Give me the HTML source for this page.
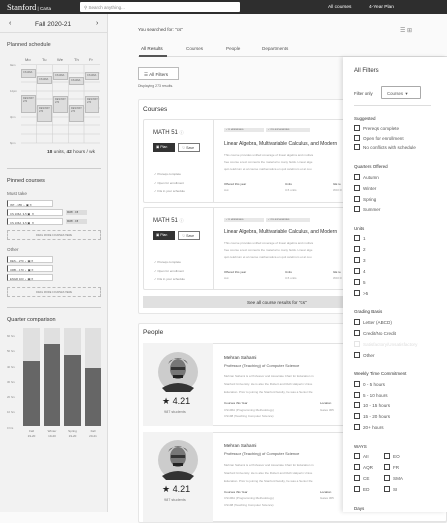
<!DOCTYPE html><html><head><meta charset="utf-8"><style>
*{box-sizing:border-box;margin:0;padding:0}
body{width:447px;height:512px;overflow:hidden;position:relative;background:#fafafa;font-family:"Liberation Sans",sans-serif;color:#333}
.a{position:absolute;white-space:nowrap}
.t{font-size:4px;color:#666}
.h{font-size:5.5px;font-weight:bold;color:#333}
.cb{position:absolute;width:6px;height:6px;border:0.8px solid #444;background:#fff}
.fl{position:absolute;font-size:4.6px;color:#555;white-space:nowrap}
.blk{position:absolute;background:#ddd;border:0.5px solid #bbb;font-size:2.5px;color:#666;padding:1px}
.chip{position:absolute;height:7px;background:#fff;border:0.5px solid #ccc;border-left:1.5px solid #555;font-size:2.8px;color:#444;padding:1.5px 2px}
.tag{position:absolute;height:4px;background:#e8e8e8;font-size:2px;color:#555;padding:1px 2px}
</style></head><body>
<div class="a" style="left:0;top:0;width:447px;height:14px;background:#2e2e2e"></div>
<div class="a" style="left:7px;top:2px;font-family:'Liberation Serif',serif;font-size:8.5px;color:#fff">Stanford<span style="font-family:'Liberation Sans';font-size:4.5px"> | Carta</span></div>
<div class="a" style="left:80px;top:2px;width:160px;height:10px;background:#fff;border-radius:1px"></div>
<div class="a" style="left:84px;top:4.5px;font-size:4.5px;color:#888">⚲ Search anything...</div>
<div class="a" style="left:328px;top:4.5px;font-size:4.8px;color:#fff">All courses</div>
<div class="a" style="left:369px;top:4.5px;font-size:4.8px;color:#fff">4-Year Plan</div>
<div class="a" style="left:0;top:14px;width:108px;height:498px;background:#f2f2f2;border-right:0.5px solid #ddd"></div>
<div class="a" style="left:9px;top:20px;font-size:7px">‹</div>
<div class="a" style="left:35px;top:21px;font-size:6.5px">Fall 2020-21</div>
<div class="a" style="left:96px;top:20px;font-size:7px">›</div>
<div class="a" style="left:0;top:32px;width:108px;height:0.5px;background:#ddd"></div>
<div class="a h" style="left:7px;top:42px;font-weight:normal;color:#444">Planned schedule</div>
<div class="a t" style="left:25px;top:57px">Mo</div><div class="a t" style="left:42px;top:57px">Tu</div><div class="a t" style="left:57px;top:57px">We</div><div class="a t" style="left:74px;top:57px">Th</div><div class="a t" style="left:89px;top:57px">Fr</div>
<svg class="a" style="left:0;top:60px" width="108" height="90">
<g stroke="#ccc" stroke-width="0.5">
<line x1="21" y1="4.5" x2="100" y2="4.5"/><line x1="21" y1="13" x2="100" y2="13"/><line x1="21" y1="22" x2="100" y2="22"/><line x1="21" y1="31" x2="100" y2="31"/><line x1="21" y1="39" x2="100" y2="39"/><line x1="21" y1="48" x2="100" y2="48"/><line x1="21" y1="57" x2="100" y2="57"/><line x1="21" y1="65" x2="100" y2="65"/><line x1="21" y1="74" x2="100" y2="74"/><line x1="21" y1="83" x2="100" y2="83"/>
<line x1="36.5" y1="5" x2="36.5" y2="83"/><line x1="52.5" y1="5" x2="52.5" y2="83"/><line x1="68.5" y1="5" x2="68.5" y2="83"/><line x1="84" y1="5" x2="84" y2="83"/></g></svg>
<div class="a" style="left:10px;top:63px;font-size:2.8px;color:#888">9am</div><div class="a" style="left:10px;top:89px;font-size:2.8px;color:#888">12pm</div><div class="a" style="left:10px;top:115px;font-size:2.8px;color:#888">3pm</div><div class="a" style="left:10px;top:141px;font-size:2.8px;color:#888">6pm</div>
<div class="blk" style="left:21px;top:69px;width:15px;height:9px">CS106A</div>
<div class="blk" style="left:37px;top:76px;width:15px;height:8px">CS106A</div>
<div class="blk" style="left:53px;top:72px;width:15px;height:8px">CS106A</div>
<div class="blk" style="left:69px;top:77px;width:15px;height:8px">CS106A</div>
<div class="blk" style="left:85px;top:72px;width:14px;height:8px">CS106A</div>
<div class="blk" style="left:21px;top:95px;width:15px;height:18px">DESINST 270</div>
<div class="blk" style="left:37px;top:105px;width:15px;height:17px">DESINST 270</div>
<div class="blk" style="left:53px;top:96px;width:15px;height:17px">DESINST 270</div>
<div class="blk" style="left:69px;top:105px;width:15px;height:17px">DESINST 270</div>
<div class="blk" style="left:85px;top:96px;width:14px;height:17px">DESINST 270</div>
<div class="a" style="left:47px;top:150px;font-size:4.8px;color:#444"><b>18</b> units, <b>42</b> hours / wk</div>
<div class="a" style="left:7px;top:168px;width:94px;height:0.5px;background:#ccc"></div>
<div class="a h" style="left:7px;top:178px;font-weight:normal;color:#333">Pinned courses</div>
<div class="a t" style="left:7px;top:191px;font-size:4.6px">Must take</div>
<div class="chip" style="left:7px;top:200px;width:46px">INT....155 &nbsp;› &nbsp;▣ ✕</div>
<div class="chip" style="left:7px;top:209px;width:56px">CS 106A &nbsp;3-5 ▣ &nbsp;✕</div>
<div class="a" style="left:66px;top:210px;width:21px;height:5px;background:#ddd;font-size:2.5px;padding:1px;color:#444">MWF · F8</div>
<div class="chip" style="left:7px;top:218px;width:56px">CS 106A &nbsp;3-5 ▣ &nbsp;✕</div>
<div class="a" style="left:66px;top:219px;width:21px;height:5px;background:#ddd;font-size:2.5px;padding:1px;color:#444">MWF · F8</div>
<div class="a" style="left:7px;top:230px;width:94px;height:10px;border:0.6px dashed #bbb;font-size:2.5px;color:#777;text-align:center;line-height:9px">DRAG MORE COURSES HERE</div>
<div class="a t" style="left:7px;top:247px;font-size:4.6px">Other</div>
<div class="chip" style="left:7px;top:256px;width:46px">DES....270 &nbsp;› &nbsp;▣ ✕</div>
<div class="chip" style="left:7px;top:265px;width:46px">URB....170 &nbsp;› &nbsp;▣ ✕</div>
<div class="chip" style="left:7px;top:274px;width:46px">ENGR 103 &nbsp;› &nbsp;▣ ✕</div>
<div class="a" style="left:7px;top:287px;width:94px;height:10px;border:0.6px dashed #bbb;font-size:2.5px;color:#777;text-align:center;line-height:9px">DRAG MORE COURSES HERE</div>
<div class="a" style="left:7px;top:307px;width:94px;height:0.5px;background:#ccc"></div>
<div class="a h" style="left:7px;top:317px;font-weight:normal">Quarter comparison</div>
<div class="a" style="left:7px;top:329px;font-size:2.8px;color:#888;line-height:15.3px">60 hrs<br>50 hrs<br>40 hrs<br>30 hrs<br>20 hrs<br>10 hrs<br>0 hrs</div>
<div class="a" style="left:23px;top:328px;width:17px;height:98px;background:#e0e0e0"></div><div class="a" style="left:23px;top:361px;width:17px;height:65px;background:#666"></div>
<div class="a" style="left:44px;top:328px;width:16px;height:98px;background:#e0e0e0"></div><div class="a" style="left:44px;top:344px;width:16px;height:82px;background:#666"></div>
<div class="a" style="left:64px;top:328px;width:17px;height:98px;background:#e0e0e0"></div><div class="a" style="left:64px;top:355px;width:17px;height:71px;background:#666"></div>
<div class="a" style="left:85px;top:328px;width:16px;height:98px;background:#e0e0e0"></div><div class="a" style="left:85px;top:368px;width:16px;height:58px;background:#666"></div>
<div class="a" style="left:23px;top:429px;width:17px;text-align:center;font-size:3px;color:#777;line-height:5px">Fall<br>19-20</div>
<div class="a" style="left:44px;top:429px;width:16px;text-align:center;font-size:3px;color:#777;line-height:5px">Winter<br>19-20</div>
<div class="a" style="left:64px;top:429px;width:17px;text-align:center;font-size:3px;color:#777;line-height:5px">Spring<br>19-20</div>
<div class="a" style="left:85px;top:429px;width:16px;text-align:center;font-size:3px;color:#777;line-height:5px">Fall<br>20-21</div>
<div class="a" style="left:138px;top:27px;font-size:4.6px;color:#444">You searched for: "cs"</div>
<div class="a" style="left:400px;top:27px;font-size:6px;color:#888">☰ ⊞</div>
<div class="a" style="left:141px;top:46px;font-size:4.6px;color:#333">All Results</div>
<div class="a" style="left:186px;top:46px;font-size:4.6px;color:#555">Courses</div>
<div class="a" style="left:226px;top:46px;font-size:4.6px;color:#555">People</div>
<div class="a" style="left:262px;top:46px;font-size:4.6px;color:#555">Departments</div>
<div class="a" style="left:138px;top:56px;width:309px;height:0.5px;background:#ddd"></div>
<div class="a" style="left:139px;top:55px;width:28px;height:1.5px;background:#555"></div>
<div class="a" style="left:138px;top:67px;width:41px;height:13px;border:0.6px solid #bbb;background:#fff;font-size:4.6px;color:#444;padding:3.5px 5px">☰ All Filters</div>
<div class="a" style="left:138px;top:84px;font-size:3.5px;color:#666">Displaying 273 results.</div>
<div class="a" style="left:138px;top:99px;width:309px;height:215px;background:#fff;border:0.5px solid #e6e6e6;border-radius:2px"></div>
<div class="a" style="left:143px;top:106px;font-size:6.5px;color:#333">Courses</div>
<div class="a" style="left:143px;top:119px;width:304px;height:84px;border:0.5px solid #e3e3e3;border-radius:2px"></div>
<div class="a" style="left:213px;top:119px;width:0.5px;height:84px;background:#e3e3e3"></div>
<div class="a" style="left:153px;top:130px;font-size:6px;color:#333">MATH 51 <span style="font-size:4px;color:#999">ⓘ</span></div>
<div class="a" style="left:153px;top:143px;width:22px;height:9px;background:#333;color:#fff;font-size:3.5px;padding:2.3px 3px">▣ Plan</div>
<div class="a" style="left:178px;top:143px;width:22px;height:9px;border:0.5px solid #777;background:#fff;font-size:3.5px;padding:2.3px 3px;color:#444">♡ Save</div>
<div class="a" style="left:154px;top:170px;font-size:3px;color:#888;line-height:8.5px">✓ Prereqs complete<br>✓ Open for enrollment<br>✓ Fits in your schedule</div>
<div class="tag" style="left:224px;top:128px;width:40px">✓ 11 HRS/WK AVG</div><div class="tag" style="left:264px;top:128px;width:44px;margin-left:2px">✓ 76% SOPHOMORES</div>
<div class="a" style="left:224px;top:141px;font-size:5px;color:#333">Linear Algebra, Multivariable Calculus, and Modern</div>
<div class="a" style="left:224px;top:151.5px;font-size:3px;color:#999;line-height:7.3px">This course provides unified coverage of linear algebra and multiva<br>free course a text connects the material to many fields. Linear alge<br>quit celebrum et al course mathematica en quit celebrum et al cou</div>
<div class="a" style="left:224px;top:181px;font-size:3px;color:#444;line-height:6px">Offered this year<br><span style="color:#999">Aut</span></div>
<div class="a" style="left:285px;top:181px;font-size:3px;color:#444;line-height:6px">Units<br><span style="color:#999">3-5 units</span></div>
<div class="a" style="left:333px;top:181px;font-size:3px;color:#444;line-height:6px">GE re<br><span style="color:#999">WAY-F</span></div>
<div class="a" style="left:143px;top:207px;width:304px;height:83px;border:0.5px solid #e3e3e3;border-radius:2px"></div>
<div class="a" style="left:213px;top:207px;width:0.5px;height:83px;background:#e3e3e3"></div>
<div class="a" style="left:153px;top:218px;font-size:6px;color:#333">MATH 51 <span style="font-size:4px;color:#999">ⓘ</span></div>
<div class="a" style="left:153px;top:231px;width:22px;height:9px;background:#333;color:#fff;font-size:3.5px;padding:2.3px 3px">▣ Plan</div>
<div class="a" style="left:178px;top:231px;width:22px;height:9px;border:0.5px solid #777;background:#fff;font-size:3.5px;padding:2.3px 3px;color:#444">♡ Save</div>
<div class="a" style="left:154px;top:258px;font-size:3px;color:#888;line-height:8.5px">✓ Prereqs complete<br>✓ Open for enrollment<br>✓ Fits in your schedule</div>
<div class="tag" style="left:224px;top:218px;width:40px">✓ 11 HRS/WK AVG</div><div class="tag" style="left:264px;top:218px;width:44px;margin-left:2px">✓ 76% SOPHOMORES</div>
<div class="a" style="left:224px;top:229px;font-size:5px;color:#333">Linear Algebra, Multivariable Calculus, and Modern</div>
<div class="a" style="left:224px;top:239.5px;font-size:3px;color:#999;line-height:7.3px">This course provides unified coverage of linear algebra and multiva<br>free course a text connects the material to many fields. Linear alge<br>quit celebrum et al course mathematica en quit celebrum et al cou</div>
<div class="a" style="left:224px;top:269px;font-size:3px;color:#444;line-height:6px">Offered this year<br><span style="color:#999">Aut</span></div>
<div class="a" style="left:285px;top:269px;font-size:3px;color:#444;line-height:6px">Units<br><span style="color:#999">3-5 units</span></div>
<div class="a" style="left:333px;top:269px;font-size:3px;color:#444;line-height:6px">GE re<br><span style="color:#999">WAY-F</span></div>
<div class="a" style="left:143px;top:296px;width:304px;height:12px;background:#e0e0e0"></div>
<div class="a" style="left:247px;top:299.5px;font-size:4.6px;color:#333">See all course results for "cs"</div>
<div class="a" style="left:138px;top:323px;width:309px;height:200px;background:#fff;border:0.5px solid #e6e6e6;border-radius:2px"></div>
<div class="a" style="left:143px;top:329px;font-size:6.5px;color:#333">People</div>
<div class="a" style="left:143px;top:343px;width:304px;height:83px;border:0.5px solid #e3e3e3;border-radius:2px"></div>
<div class="a" style="left:143px;top:343px;width:70px;height:83px;background:#f3f3f3"></div>
<div class="a" style="left:143px;top:432px;width:304px;height:90px;border:0.5px solid #e3e3e3;border-radius:2px"></div>
<div class="a" style="left:143px;top:432px;width:70px;height:90px;background:#f3f3f3"></div>
<svg class="a" style="left:158px;top:352px" width="40" height="40"><circle cx="20" cy="20" r="20" fill="#ccc"/><ellipse cx="20" cy="17" rx="8" ry="10" fill="#777"/><path d="M10 12 Q20 0 30 12 L28 9 Q20 4 12 9Z" fill="#222"/><rect x="13" y="15" width="14" height="3" fill="#333"/><rect x="15" y="23" width="10" height="3" fill="#222"/><path d="M4 36 Q20 26 36 36 L32 40 L8 40Z" fill="#333"/></svg>
<svg class="a" style="left:158px;top:440px" width="40" height="40"><circle cx="20" cy="20" r="20" fill="#ccc"/><ellipse cx="20" cy="17" rx="8" ry="10" fill="#777"/><path d="M10 12 Q20 0 30 12 L28 9 Q20 4 12 9Z" fill="#222"/><rect x="13" y="15" width="14" height="3" fill="#333"/><rect x="15" y="23" width="10" height="3" fill="#222"/><path d="M4 36 Q20 26 36 36 L32 40 L8 40Z" fill="#333"/></svg>
<div class="a" style="left:162px;top:396px;font-size:9px;color:#222">★ 4.21</div>
<div class="a" style="left:164px;top:410px;font-size:3.8px;color:#777">987 students</div>
<div class="a" style="left:162px;top:484px;font-size:9px;color:#222">★ 4.21</div>
<div class="a" style="left:164px;top:498px;font-size:3.8px;color:#777">987 students</div>
<div class="a" style="left:224px;top:354.5px;font-size:4.6px;color:#333">Mehran Sahami</div>
<div class="a" style="left:224px;top:362.5px;font-size:4px;color:#555">Professor (Teaching) of Computer Science</div>
<div class="a" style="left:224px;top:372px;font-size:3px;color:#999;line-height:8px">Mehran Sahami is a Professor and Associate Chair for Education in<br>Stanford University. He is also the Robert and Ruth Halperin Unive<br>Education. Prior to joining the Stanford faculty, he was a Senior Re</div>
<div class="a" style="left:224px;top:400px;font-size:3px;color:#444;line-height:6.5px">Courses this Year<br><span style="color:#999">CS106A (Programming Methodology)<br>CS198 (Teaching Computer Science)</span></div>
<div class="a" style="left:320px;top:400px;font-size:3px;color:#444;line-height:6.5px">Location<br><span style="color:#999">Gates 305</span></div>
<div class="a" style="left:224px;top:443px;font-size:4.6px;color:#333">Mehran Sahami</div>
<div class="a" style="left:224px;top:451px;font-size:4px;color:#555">Professor (Teaching) of Computer Science</div>
<div class="a" style="left:224px;top:460.5px;font-size:3px;color:#999;line-height:8px">Mehran Sahami is a Professor and Associate Chair for Education in<br>Stanford University. He is also the Robert and Ruth Halperin Unive<br>Education. Prior to joining the Stanford faculty, he was a Senior Re</div>
<div class="a" style="left:224px;top:488.5px;font-size:3px;color:#444;line-height:6.5px">Courses this Year<br><span style="color:#999">CS106A (Programming Methodology)<br>CS198 (Teaching Computer Science)</span></div>
<div class="a" style="left:320px;top:488.5px;font-size:3px;color:#444;line-height:6.5px">Location<br><span style="color:#999">Gates 305</span></div>
<div class="a" style="left:343px;top:57px;width:104px;height:455px;background:#fff;box-shadow:-2px 0 4px rgba(0,0,0,0.12)"></div>
<div class="a" style="left:354px;top:68px;font-size:6px;color:#333">All Filters</div>
<div class="a" style="left:354px;top:91px;font-size:4.3px;color:#444">Filter only</div>
<div class="a" style="left:381px;top:86px;width:40px;height:13px;border:0.6px solid #aaa;border-radius:1px;font-size:4.3px;color:#555;padding:3.5px 5px">Courses &nbsp;▾</div>
<div class="a" style="left:354px;top:105px;width:77px;height:0.5px;background:#ddd"></div>
<div class="a" style="left:354px;top:116px;font-size:4.5px;color:#333">Suggested</div>
<div class="a" style="left:354px;top:164px;font-size:4.5px;color:#333">Quarters Offered</div>
<div class="a" style="left:354px;top:226px;font-size:4.5px;color:#333">Units</div>
<div class="a" style="left:354px;top:309px;font-size:4.5px;color:#333">Grading Basis</div>
<div class="a" style="left:354px;top:371px;font-size:4.5px;color:#333">Weekly Time Commitment</div>
<div class="a" style="left:354px;top:444px;font-size:4.5px;color:#333">WAYS</div>
<div class="a" style="left:354px;top:506px;font-size:4.5px;color:#333">Days</div>
<div class="cb" style="left:354px;top:125px"></div><div class="fl" style="left:363px;top:125.5px">Prereqs complete</div>
<div class="cb" style="left:354px;top:135px"></div><div class="fl" style="left:363px;top:135.5px">Open for enrollment</div>
<div class="cb" style="left:354px;top:144px"></div><div class="fl" style="left:363px;top:144.5px">No conflicts with schedule</div>
<div class="cb" style="left:354px;top:174px"></div><div class="fl" style="left:363px;top:174.5px">Autumn</div>
<div class="cb" style="left:354px;top:185px"></div><div class="fl" style="left:363px;top:185.5px">Winter</div>
<div class="cb" style="left:354px;top:196px"></div><div class="fl" style="left:363px;top:196.5px">Spring</div>
<div class="cb" style="left:354px;top:206px"></div><div class="fl" style="left:363px;top:206.5px">Summer</div>
<div class="cb" style="left:354px;top:235px"></div><div class="fl" style="left:363px;top:235.5px">1</div>
<div class="cb" style="left:354px;top:246px"></div><div class="fl" style="left:363px;top:246.5px">2</div>
<div class="cb" style="left:354px;top:257px"></div><div class="fl" style="left:363px;top:257.5px">3</div>
<div class="cb" style="left:354px;top:268px"></div><div class="fl" style="left:363px;top:268.5px">4</div>
<div class="cb" style="left:354px;top:279px"></div><div class="fl" style="left:363px;top:279.5px">5</div>
<div class="cb" style="left:354px;top:290px"></div><div class="fl" style="left:363px;top:290.5px">&gt;5</div>
<div class="cb" style="left:354px;top:319px"></div><div class="fl" style="left:363px;top:319.5px">Letter (ABCD)</div>
<div class="cb" style="left:354px;top:330px"></div><div class="fl" style="left:363px;top:330.5px">Credit/No Credit</div>
<div class="cb" style="left:354px;top:341px;border-color:#e5e5e5"></div><div class="fl" style="left:363px;top:341.5px;color:#ddd">Satisfactory/Unsatisfactory</div>
<div class="cb" style="left:354px;top:352px"></div><div class="fl" style="left:363px;top:352.5px">Other</div>
<div class="cb" style="left:354px;top:381px"></div><div class="fl" style="left:363px;top:381.5px">0 - 5 hours</div>
<div class="cb" style="left:354px;top:392px"></div><div class="fl" style="left:363px;top:392.5px">5 - 10 hours</div>
<div class="cb" style="left:354px;top:402px"></div><div class="fl" style="left:363px;top:402.5px">10 - 15 hours</div>
<div class="cb" style="left:354px;top:413px"></div><div class="fl" style="left:363px;top:413.5px">15 - 20 hours</div>
<div class="cb" style="left:354px;top:424px"></div><div class="fl" style="left:363px;top:424.5px">20+ hours</div>
<div class="cb" style="left:354px;top:453px"></div><div class="fl" style="left:363px;top:453.5px">AII</div>
<div class="cb" style="left:354px;top:464px"></div><div class="fl" style="left:363px;top:464.5px">AQR</div>
<div class="cb" style="left:354px;top:475px"></div><div class="fl" style="left:363px;top:475.5px">CE</div>
<div class="cb" style="left:354px;top:486px"></div><div class="fl" style="left:363px;top:486.5px">ED</div>
<div class="cb" style="left:384px;top:453px"></div><div class="fl" style="left:393px;top:453.5px">EO</div>
<div class="cb" style="left:384px;top:464px"></div><div class="fl" style="left:393px;top:464.5px">FR</div>
<div class="cb" style="left:384px;top:475px"></div><div class="fl" style="left:393px;top:475.5px">SMA</div>
<div class="cb" style="left:384px;top:486px"></div><div class="fl" style="left:393px;top:486.5px">SI</div>
</body></html>
